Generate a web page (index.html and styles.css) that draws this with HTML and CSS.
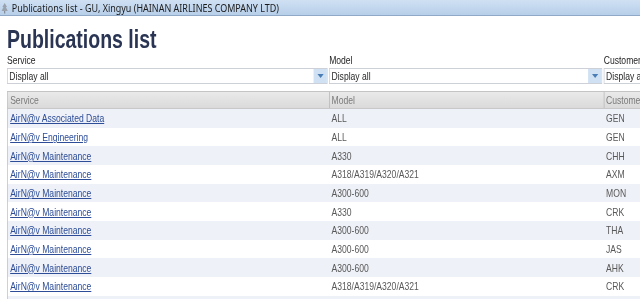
FILE: index.html
```html
<!DOCTYPE html>
<html lang="en">
<head>
<meta charset="utf-8">
<title>Publications list</title>
<link rel="stylesheet" href="styles.css">
</head>
<body>
<div class="screen">
  <div class="titlebar">
    <svg class="app-icon" width="10" height="12" viewBox="0 0 10 12">
      <path d="M5 1 L8 5 H6.5 L9 9 H1 L3.5 5 H2 Z" fill="#9aa3ad"/>
      <rect x="4.3" y="9" width="1.4" height="2.5" fill="#7d858f"/>
    </svg>
    <span class="titlebar-text">Publications list - GU, Xingyu (HAINAN AIRLINES COMPANY LTD)</span>
  </div>

  <div class="page">
    <h1 class="page-title">Publications list</h1>

    <div class="filters">
      <div class="filter">
        <label class="filter-label">Service</label>
        <div class="select"><span class="select-value">Display all</span><span class="select-arrow"></span></div>
      </div>
      <div class="filter">
        <label class="filter-label">Model</label>
        <div class="select"><span class="select-value">Display all</span><span class="select-arrow"></span></div>
      </div>
      <div class="filter">
        <label class="filter-label">Customer</label>
        <div class="select"><span class="select-value">Display all</span><span class="select-arrow"></span></div>
      </div>
    </div>

    <div class="grid">
      <div class="row head">
        <div class="cell">Service</div>
        <div class="cell sep">Model</div>
        <div class="cell sep">Customer</div>
      </div>
      <div class="row odd"><div class="cell"><a href="#">AirN@v Associated Data</a></div><div class="cell">ALL</div><div class="cell">GEN</div></div>
      <div class="row"><div class="cell"><a href="#">AirN@v Engineering</a></div><div class="cell">ALL</div><div class="cell">GEN</div></div>
      <div class="row odd"><div class="cell"><a href="#">AirN@v Maintenance</a></div><div class="cell">A330</div><div class="cell">CHH</div></div>
      <div class="row"><div class="cell"><a href="#">AirN@v Maintenance</a></div><div class="cell">A318/A319/A320/A321</div><div class="cell">AXM</div></div>
      <div class="row odd"><div class="cell"><a href="#">AirN@v Maintenance</a></div><div class="cell">A300-600</div><div class="cell">MON</div></div>
      <div class="row"><div class="cell"><a href="#">AirN@v Maintenance</a></div><div class="cell">A330</div><div class="cell">CRK</div></div>
      <div class="row odd"><div class="cell"><a href="#">AirN@v Maintenance</a></div><div class="cell">A300-600</div><div class="cell">THA</div></div>
      <div class="row"><div class="cell"><a href="#">AirN@v Maintenance</a></div><div class="cell">A300-600</div><div class="cell">JAS</div></div>
      <div class="row odd"><div class="cell"><a href="#">AirN@v Maintenance</a></div><div class="cell">A300-600</div><div class="cell">AHK</div></div>
      <div class="row"><div class="cell"><a href="#">AirN@v Maintenance</a></div><div class="cell">A318/A319/A320/A321</div><div class="cell">CRK</div></div>
      <div class="row odd"><div class="cell"></div><div class="cell"></div><div class="cell"></div></div>
    </div>
  </div>
</div>
</body>
</html>
```

FILE: styles.css
```css
html, body {
  margin: 0;
  padding: 0;
  background: #ffffff;
  overflow: hidden;
}

body {
  width: 640px;
  height: 299px;
  font-family: "Liberation Sans", Arial, sans-serif;
}

/* The captured window is horizontally compressed; emulate it */
.screen {
  width: 821px;
  transform: scaleX(0.78);
  transform-origin: 0 0;
}

.titlebar {
  height: 15px;
  display: flex;
  align-items: center;
  gap: 4px;
  padding-left: 1px;
  background: linear-gradient(#cfe0f3, #b7cfe9);
  border-bottom: 1px solid #8fa9c6;
}

.app-icon {
  flex: none;
}

.titlebar-text {
  font-family: "Noto Sans", "Liberation Sans", sans-serif;
  font-size: 11.5px;
  color: #1b1b1b;
  line-height: 15px;
  white-space: nowrap;
}

.page {
  padding: 12px 0 0 9px;
}

.page-title {
  margin: 0;
  font-size: 25px;
  line-height: 22px;
  font-weight: bold;
  color: #2a3554;
}

.filters {
  margin-top: 4px;
  display: grid;
  grid-template-columns: 413px 352px 200px;
}

.filter {
  display: flex;
  flex-direction: column;
  gap: 1px;
}

.filter-label {
  font-size: 11px;
  line-height: 13px;
  color: #1f1f1f;
}

.select {
  height: 14px;
  margin-right: 2px;
  border: 1px solid #cdd0d6;
  display: flex;
  align-items: center;
  background: #fff;
}

.select-value {
  flex: 1;
  padding-left: 2px;
  font-size: 11px;
  color: #2a2a2a;
  white-space: nowrap;
  overflow: hidden;
}

.select-arrow {
  flex: none;
  width: 17px;
  height: 14px;
  background: #cfe1f3;
  display: flex;
  align-items: center;
  justify-content: center;
}

.select-arrow::before {
  content: "";
  border-left: 4px solid transparent;
  border-right: 4px solid transparent;
  border-top: 4px solid #4a7db4;
}

.grid {
  margin-top: 7px;
  border-left: 1px solid #b5b5b5;
}

.row {
  display: grid;
  grid-template-columns: 412px 352px 200px;
  height: 18.67px;
  align-items: center;
  background: #ffffff;
}

.row.odd {
  background: #eef1f7;
}

.row.head {
  height: 16px;
  background: linear-gradient(#e9e9e9, #dadada);
  border-top: 1px solid #c4c4c4;
  border-bottom: 1px solid #c8c8c8;
}

.cell {
  padding-left: 3px;
  font-size: 11px;
  color: #585858;
  white-space: nowrap;
  overflow: hidden;
  height: 100%;
  display: flex;
  align-items: center;
}

.row.head .cell {
  color: #7a7a7a;
}

.row.head .cell.sep {
  border-left: 1px solid #b9b9b9;
  padding-left: 2px;
}

.cell a {
  color: #2d4d98;
  text-decoration: underline;
}
```
